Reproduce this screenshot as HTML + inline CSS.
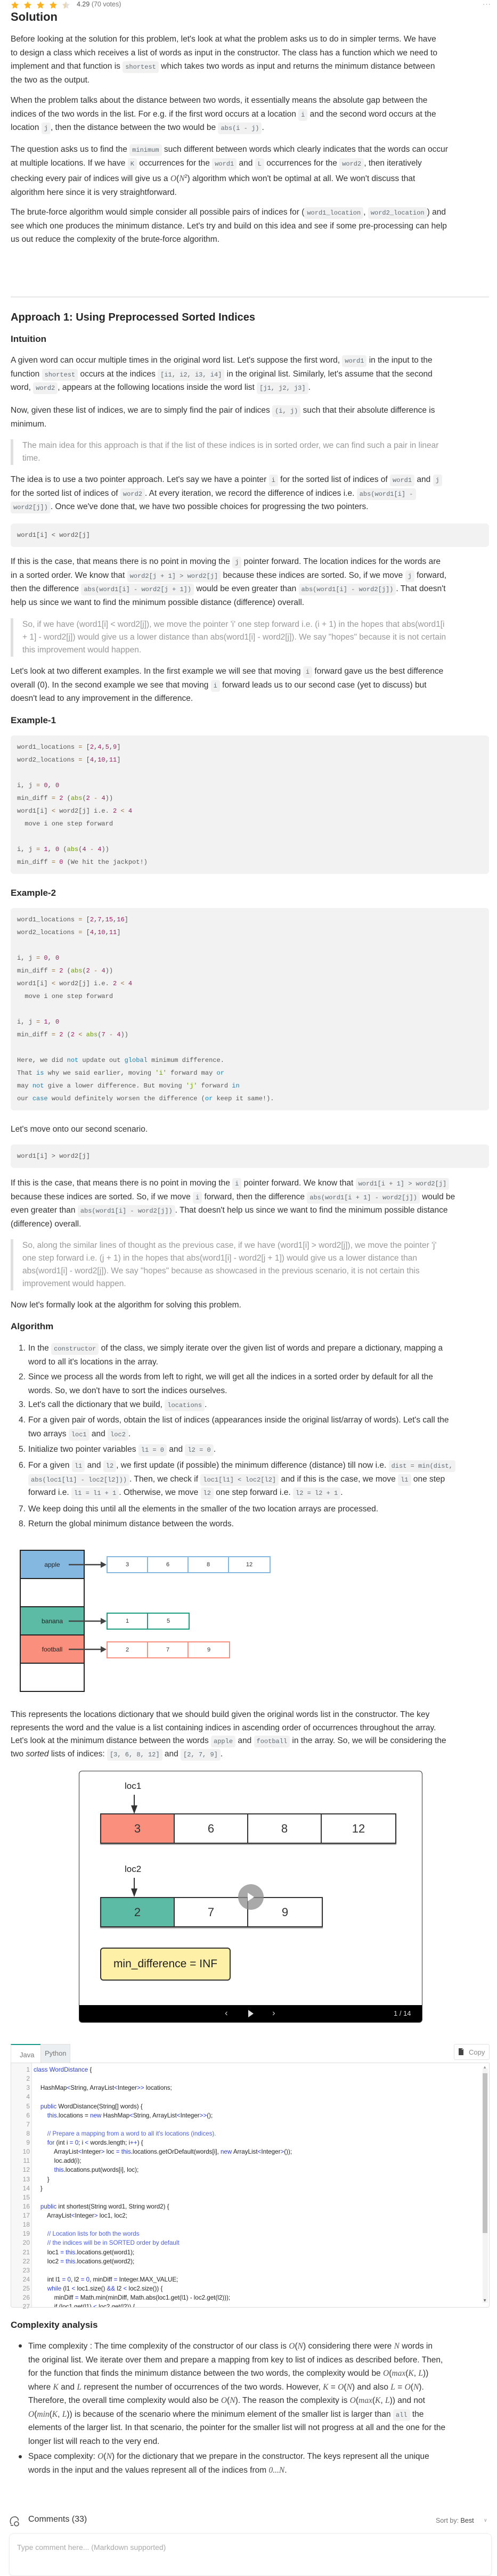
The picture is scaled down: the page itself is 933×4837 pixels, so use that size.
<!DOCTYPE html>
<html><head><meta charset="utf-8">
<style>
*{box-sizing:border-box}
body{margin:0;background:#fff;width:933px;height:4819px;position:relative;overflow:hidden;font-family:"Liberation Sans",sans-serif;color:#333}
.p{position:absolute;left:20px;margin:0;font-size:15.5px;line-height:25.5px;white-space:nowrap;color:#333}
.c{font:12px "Liberation Mono",monospace;background:#f1f1f1;color:#5f6b73;padding:4px 5px;border-radius:4px}
.h{position:absolute;left:20px;margin:0;font-weight:bold;color:#262626;white-space:nowrap}
.bq{position:absolute;left:20px;width:898px;border-left:5px solid #e0e0e0;padding-left:17px;font-size:15.5px;line-height:24px;color:#9a9a9a;white-space:nowrap}
.cb{position:absolute;left:20px;width:898px;background:#f2f2f2;border-radius:6px;padding:10px 12px;font:12px/24px "Liberation Mono",monospace;color:#555;white-space:pre}
.n{color:#a0195e}.g{color:#6b9c00}.o{color:#9a6e3a}.b{color:#1b7fb0}
.m{font-family:"Liberation Serif",serif;font-style:italic;color:#555}
.li{position:absolute;left:35px;font-size:15.5px;line-height:25.5px;white-space:nowrap;color:#333}
.li span.num{position:absolute;left:0}
.li .t{margin-left:18px;display:block}
.cell{position:absolute;display:flex;align-items:center;justify-content:center}
.code{position:absolute;left:63px;font-size:11.6px;line-height:17.12px;white-space:pre;color:#222}
.k{color:#2b3ed8}.cm{color:#4b5fe6}
.ln{position:absolute;left:20px;width:36px;text-align:right;font-size:12px;line-height:17.12px;color:#999;white-space:pre}
</style></head><body>

<!-- rating -->
<svg style="position:absolute;left:20px;top:2px" width="115" height="15" viewBox="0 0 115 15">
<g fill="#ffb21e">
<path d="M8 0.5l2.2 4.6 5 .6-3.7 3.5 1 5-4.5-2.5-4.5 2.5 1-5L.8 5.7l5-.6z"/>
<path transform="translate(24 0)" d="M8 0.5l2.2 4.6 5 .6-3.7 3.5 1 5-4.5-2.5-4.5 2.5 1-5L.8 5.7l5-.6z"/>
<path transform="translate(48 0)" d="M8 0.5l2.2 4.6 5 .6-3.7 3.5 1 5-4.5-2.5-4.5 2.5 1-5L.8 5.7l5-.6z"/>
<path transform="translate(72 0)" d="M8 0.5l2.2 4.6 5 .6-3.7 3.5 1 5-4.5-2.5-4.5 2.5 1-5L.8 5.7l5-.6z"/>
</g>
<path transform="translate(96 0)" fill="#e2e2e2" d="M8 0.5l2.2 4.6 5 .6-3.7 3.5 1 5-4.5-2.5-4.5 2.5 1-5L.8 5.7l5-.6z"/>
<path transform="translate(96 0)" fill="#ffb21e" d="M8 0.5L8 12.2 3.5 14.7l1-5L.8 5.7l5-.6z" opacity=".25"/>
</svg>
<div style="position:absolute;left:144px;top:1px;font-size:12.5px;color:#555">4.29 <span style="color:#777">(70 votes)</span></div>
<div style="position:absolute;left:906px;top:0px;font-size:13px;color:#999;letter-spacing:1px">···</div>
<div class="h" style="top:18px;font-size:22px;line-height:28px">Solution</div>

<div class="p" style="top:61px">Before looking at the solution for this problem, let's look at what the problem asks us to do in simpler terms. We have<br>to design a class which receives a list of words as input in the constructor. The class has a function which we need to<br>implement and that function is <span class="c">shortest</span> which takes two words as input and returns the minimum distance between<br>the two as the output.</div>

<div class="p" style="top:176px">When the problem talks about the distance between two words, it essentially means the absolute gap between the<br>indices of the two words in the list. For e.g. if the first word occurs at a location <span class="c">i</span> and the second word occurs at the<br>location <span class="c">j</span>, then the distance between the two would be <span class="c">abs(i - j)</span>.</div>

<div class="p" style="top:268px">The question asks us to find the <span class="c">minimum</span> such different between words which clearly indicates that the words can occur<br>at multiple locations. If we have <span class="c">K</span> occurrences for the <span class="c">word1</span> and <span class="c">L</span> occurrences for the <span class="c">word2</span>, then iteratively<br>checking every pair of indices will give us a <span class="m">O</span>(<span class="m">N</span><sup style="font-size:9px">2</sup>) algorithm which won't be optimal at all. We won't discuss that<br>algorithm here since it is very straightforward.</div>

<div class="p" style="top:386px">The brute-force algorithm would simple consider all possible pairs of indices for (<span class="c">word1_location</span>, <span class="c">word2_location</span>) and<br>see which one produces the minimum distance. Let's try and build on this idea and see if some pre-processing can help<br>us out reduce the complexity of the brute-force algorithm.</div>

<div style="position:absolute;left:20px;top:556px;width:898px;height:3px;background:#eee"></div>

<div class="h" style="top:583px;font-size:20px;line-height:26px">Approach 1: Using Preprocessed Sorted Indices</div>
<div class="h" style="top:625px;font-size:17px;line-height:24px">Intuition</div>

<div class="p" style="top:664px">A given word can occur multiple times in the original word list. Let's suppose the first word, <span class="c">word1</span> in the input to the<br>function <span class="c">shortest</span> occurs at the indices <span class="c">[i1, i2, i3, i4]</span> in the original list. Similarly, let's assume that the second<br>word, <span class="c">word2</span>, appears at the following locations inside the word list <span class="c">[j1, j2, j3]</span>.</div>

<div class="p" style="top:758px">Now, given these list of indices, we are to simply find the pair of indices <span class="c">(i, j)</span> such that their absolute difference is<br>minimum.</div>

<div class="bq" style="top:825px;height:48px">The main idea for this approach is that if the list of these indices is in sorted order, we can find such a pair in linear<br>time.</div>

<div class="p" style="top:888px">The idea is to use a two pointer approach. Let's say we have a pointer <span class="c">i</span> for the sorted list of indices of <span class="c">word1</span> and <span class="c">j</span><br>for the sorted list of indices of <span class="c">word2</span>. At every iteration, we record the difference of indices i.e. <span class="c">abs(word1[i] -</span><br><span class="c">word2[j])</span>. Once we've done that, we have two possible choices for progressing the two pointers.</div>

<div class="cb" style="top:983px;height:44px">word1[i] &lt; word2[j]</div>

<div class="p" style="top:1042px">If this is the case, that means there is no point in moving the <span class="c">j</span> pointer forward. The location indices for the words are<br>in a sorted order. We know that <span class="c">word2[j + 1] &gt; word2[j]</span> because these indices are sorted. So, if we move <span class="c">j</span> forward,<br>then the difference <span class="c">abs(word1[i] - word2[j + 1])</span> would be even greater than <span class="c">abs(word1[i] - word2[j])</span>. That doesn't<br>help us since we want to find the minimum possible distance (difference) overall.</div>

<div class="bq" style="top:1161px;height:72px">So, if we have (word1[i] &lt; word2[j]), we move the pointer 'i' one step forward i.e. (i + 1) in the hopes that abs(word1[i<br>+ 1] - word2[j]) would give us a lower distance than abs(word1[i] - word2[j]). We say "hopes" because it is not certain<br>this improvement would happen.</div>

<div class="p" style="top:1248px">Let's look at two different examples. In the first example we will see that moving <span class="c">i</span> forward gave us the best difference<br>overall (0). In the second example we see that moving <span class="c">i</span> forward leads us to our second case (yet to discuss) but<br>doesn't lead to any improvement in the difference.</div>

<div class="h" style="top:1341px;font-size:17px;line-height:24px">Example-1</div>
<div class="cb" style="top:1381px;height:260px">word1_locations <span class="o">=</span> [<span class="n">2</span>,<span class="n">4</span>,<span class="n">5</span>,<span class="n">9</span>]
word2_locations <span class="o">=</span> [<span class="n">4</span>,<span class="n">10</span>,<span class="n">11</span>]

i, j <span class="o">=</span> <span class="n">0</span>, <span class="n">0</span>
min_diff <span class="o">=</span> <span class="n">2</span> (<span class="g">abs</span>(<span class="n">2</span> <span class="o">-</span> <span class="n">4</span>))
word1[i] <span class="o">&lt;</span> word2[j] i.e. <span class="n">2</span> <span class="o">&lt;</span> <span class="n">4</span>
  move i one step forward

i, j <span class="o">=</span> <span class="n">1</span>, <span class="n">0</span> (<span class="g">abs</span>(<span class="n">4</span> <span class="o">-</span> <span class="n">4</span>))
min_diff <span class="o">=</span> <span class="n">0</span> (We hit the jackpot!)</div>

<div class="h" style="top:1665px;font-size:17px;line-height:24px">Example-2</div>
<div class="cb" style="top:1705px;height:380px">word1_locations <span class="o">=</span> [<span class="n">2</span>,<span class="n">7</span>,<span class="n">15</span>,<span class="n">16</span>]
word2_locations <span class="o">=</span> [<span class="n">4</span>,<span class="n">10</span>,<span class="n">11</span>]

i, j <span class="o">=</span> <span class="n">0</span>, <span class="n">0</span>
min_diff <span class="o">=</span> <span class="n">2</span> (<span class="g">abs</span>(<span class="n">2</span> <span class="o">-</span> <span class="n">4</span>))
word1[i] <span class="o">&lt;</span> word2[j] i.e. <span class="n">2</span> <span class="o">&lt;</span> <span class="n">4</span>
  move i one step forward

i, j <span class="o">=</span> <span class="n">1</span>, <span class="n">0</span>
min_diff <span class="o">=</span> <span class="n">2</span> (<span class="n">2</span> <span class="o">&lt;</span> <span class="g">abs</span>(<span class="n">7</span> <span class="o">-</span> <span class="n">4</span>))

Here, we did <span class="b">not</span> update out <span class="b">global</span> minimum difference.
That <span class="b">is</span> why we said earlier, moving <span class="g">'i'</span> forward may <span class="b">or</span>
may <span class="b">not</span> give a lower difference. But moving <span class="g">'j'</span> forward <span class="b">in</span>
our <span class="b">case</span> would definitely worsen the difference (<span class="b">or</span> keep it same!).</div>

<div class="p" style="top:2108px">Let's move onto our second scenario.</div>
<div class="cb" style="top:2149px;height:44px">word1[i] &gt; word2[j]</div>

<div class="p" style="top:2209px">If this is the case, that means there is no point in moving the <span class="c">i</span> pointer forward. We know that <span class="c">word1[i + 1] &gt; word2[j]</span><br>because these indices are sorted. So, if we move <span class="c">i</span> forward, then the difference <span class="c">abs(word1[i + 1] - word2[j])</span> would be<br>even greater than <span class="c">abs(word1[i] - word2[j])</span>. That doesn't help us since we want to find the minimum possible distance<br>(difference) overall.</div>

<div class="bq" style="top:2327px;height:96px">So, along the similar lines of thought as the previous case, if we have (word1[i] &gt; word2[j]), we move the pointer 'j'<br>one step forward i.e. (j + 1) in the hopes that abs(word1[i] - word2[j + 1]) would give us a lower distance than<br>abs(word1[i] - word2[j]). We say "hopes" because as showcased in the previous scenario, it is not certain this<br>improvement would happen.</div>

<div class="p" style="top:2438px">Now let's formally look at the algorithm for solving this problem.</div>
<div class="h" style="top:2479px;font-size:17px;line-height:24px">Algorithm</div>

<div class="li" style="top:2519px"><span class="num">1.</span><span class="t">In the <span class="c">constructor</span> of the class, we simply iterate over the given list of words and prepare a dictionary, mapping a<br>word to all it's locations in the array.</span></div>
<div class="li" style="top:2573px"><span class="num">2.</span><span class="t">Since we process all the words from left to right, we will get all the indices in a sorted order by default for all the<br>words. So, we don't have to sort the indices ourselves.</span></div>
<div class="li" style="top:2625px"><span class="num">3.</span><span class="t">Let's call the dictionary that we build, <span class="c">locations</span>.</span></div>
<div class="li" style="top:2654px"><span class="num">4.</span><span class="t">For a given pair of words, obtain the list of indices (appearances inside the original list/array of words). Let's call the<br>two arrays <span class="c">loc1</span> and <span class="c">loc2</span>.</span></div>
<div class="li" style="top:2709px"><span class="num">5.</span><span class="t">Initialize two pointer variables <span class="c">l1 = 0</span> and <span class="c">l2 = 0</span>.</span></div>
<div class="li" style="top:2739px"><span class="num">6.</span><span class="t">For a given <span class="c">l1</span> and <span class="c">l2</span>, we first update (if possible) the minimum difference (distance) till now i.e. <span class="c">dist = min(dist,</span><br><span class="c">abs(loc1[l1] - loc2[l2]))</span>. Then, we check if <span class="c">loc1[l1] &lt; loc2[l2]</span> and if this is the case, we move <span class="c">l1</span> one step<br>forward i.e. <span class="c">l1 = l1 + 1</span>. Otherwise, we move <span class="c">l2</span> one step forward i.e. <span class="c">l2 = l2 + 1</span>.</span></div>
<div class="li" style="top:2821px"><span class="num">7.</span><span class="t">We keep doing this until all the elements in the smaller of the two location arrays are processed.</span></div>
<div class="li" style="top:2849px"><span class="num">8.</span><span class="t">Return the global minimum distance between the words.</span></div>

<!-- dictionary diagram -->
<div style="position:absolute;left:37px;top:2910px;width:122px;height:267px;border:2px solid #222;background:#fff"></div>
<div class="cell" style="left:37px;top:2910px;width:122px;height:55px;background:#85b8e0;border:2px solid #222;font-size:12px;color:#222">apple</div>
<div class="cell" style="left:37px;top:3016px;width:122px;height:55px;background:#5bbba5;border:2px solid #222;font-size:12px;color:#222">banana</div>
<div class="cell" style="left:37px;top:3069px;width:122px;height:55px;background:#fb8f7d;border:2px solid #222;font-size:12px;color:#222">football</div>
<svg style="position:absolute;left:125px;top:2930px" width="80" height="200">
<g stroke="#444" stroke-width="2.5" fill="#444">
<line x1="4" y1="8" x2="66" y2="8"/><path d="M64 2L75 8 64 14z" stroke="none"/>
<line x1="4" y1="114" x2="66" y2="114"/><path d="M64 108L75 114 64 120z" stroke="none"/>
<line x1="4" y1="167" x2="66" y2="167"/><path d="M64 161L75 167 64 173z" stroke="none"/>
</g></svg>
<div style="position:absolute;left:200px;top:2922px;display:flex;border:2px solid #85b8e0;height:32px">
<div class="cell" style="position:static;width:76px;border-right:2px solid #85b8e0;font-size:11px">3</div>
<div class="cell" style="position:static;width:76px;border-right:2px solid #85b8e0;font-size:11px">6</div>
<div class="cell" style="position:static;width:76px;border-right:2px solid #85b8e0;font-size:11px">8</div>
<div class="cell" style="position:static;width:76px;font-size:11px">12</div></div>
<div style="position:absolute;left:200px;top:3028px;display:flex;border:2px solid #1a9c80;height:32px">
<div class="cell" style="position:static;width:76px;border-right:2px solid #1a9c80;font-size:11px">1</div>
<div class="cell" style="position:static;width:76px;font-size:11px">5</div></div>
<div style="position:absolute;left:200px;top:3082px;display:flex;border:2px solid #fb8f7d;height:32px">
<div class="cell" style="position:static;width:76px;border-right:2px solid #fb8f7d;font-size:11px">2</div>
<div class="cell" style="position:static;width:76px;border-right:2px solid #fb8f7d;font-size:11px">7</div>
<div class="cell" style="position:static;width:76px;font-size:11px">9</div></div>

<div class="p" style="top:3208px;line-height:24.5px">This represents the locations dictionary that we should build given the original words list in the constructor. The key<br>represents the word and the value is a list containing indices in ascending order of occurrences throughout the array.<br>Let's look at the minimum distance between the words <span class="c">apple</span> and <span class="c">football</span> in the array. So, we will be considering the<br>two <i>sorted</i> lists of indices: <span class="c">[3, 6, 8, 12]</span> and <span class="c">[2, 7, 9]</span>.</div>

<!-- slideshow -->
<div style="position:absolute;left:148px;top:3325px;width:645px;height:473px;border:1px solid #333;border-radius:6px;overflow:hidden;background:#fff">
<div style="position:absolute;left:0;bottom:0;width:100%;height:32px;background:#000;color:#fff">
<div style="position:absolute;left:273px;top:5px;font-size:17px;color:#ccc">&#8249;</div>
<svg style="position:absolute;left:316px;top:9px" width="12" height="14"><path d="M1 0L11 7 1 14z" fill="#ddd"/></svg>
<div style="position:absolute;left:362px;top:5px;font-size:17px;color:#ccc">&#8250;</div>
<div style="position:absolute;left:590px;top:8px;font-size:13px;color:#ddd">1 / 14</div>
</div>
</div>
<div style="position:absolute;left:234px;top:3344px;font-size:17px;color:#222">loc1</div>
<svg style="position:absolute;left:245px;top:3370px" width="14" height="38"><line x1="7" y1="0" x2="7" y2="22" stroke="#333" stroke-width="2"/><path d="M1 20L13 20 7 36z" fill="#333"/></svg>
<div style="position:absolute;left:188px;top:3405px;display:flex;border:2px solid #333;height:57px;box-shadow:0 2px 1px #999">
<div class="cell" style="position:static;width:138px;border-right:2px solid #333;background:#fb8f7d;font-size:22px">3</div>
<div class="cell" style="position:static;width:138px;border-right:2px solid #333;font-size:22px">6</div>
<div class="cell" style="position:static;width:138px;border-right:2px solid #333;font-size:22px">8</div>
<div class="cell" style="position:static;width:138px;font-size:22px">12</div></div>
<div style="position:absolute;left:234px;top:3500px;font-size:17px;color:#222">loc2</div>
<svg style="position:absolute;left:245px;top:3526px" width="14" height="38"><line x1="7" y1="0" x2="7" y2="22" stroke="#333" stroke-width="2"/><path d="M1 20L13 20 7 36z" fill="#333"/></svg>
<div style="position:absolute;left:188px;top:3562px;display:flex;border:2px solid #333;height:57px;box-shadow:0 2px 1px #999">
<div class="cell" style="position:static;width:138px;border-right:2px solid #333;background:#5bbba5;font-size:22px">2</div>
<div class="cell" style="position:static;width:138px;border-right:2px solid #333;font-size:22px">7</div>
<div class="cell" style="position:static;width:138px;font-size:22px">9</div></div>
<div style="position:absolute;left:447px;top:3538px;width:48px;height:48px;border-radius:50%;background:rgba(140,140,140,.75)"></div>
<svg style="position:absolute;left:464px;top:3553px" width="14" height="18"><path d="M1 1L13 9 1 17z" fill="#fff"/></svg>
<div class="cell" style="left:188px;top:3657px;width:245px;height:62px;background:#fff0a8;border:2px solid #333;border-radius:6px;font-size:21px;color:#222">min_difference = INF</div>

<!-- code widget -->
<div style="position:absolute;left:20px;top:3838px;width:56px;height:36px;background:#fff;border-top:2px solid #1a9c8c;border-left:1px solid #e6e6e6;font-size:13px;color:#777;padding:11px 0 0 16px">Java</div>
<div style="position:absolute;left:76px;top:3838px;width:56px;height:36px;background:#eceff1;border:1px solid #e0e0e0;border-bottom:none;font-size:13px;color:#777;padding:9px 0 0 7px">Python</div>
<div style="position:absolute;left:852px;top:3838px;width:67px;height:30px;border:1px solid #e2e2e2;border-radius:3px;font-size:13px;color:#888;padding:7px 0 0 27px">Copy</div>
<svg style="position:absolute;left:860px;top:3845px" width="12" height="15"><path d="M1 1h6v3h3v10H1z" fill="#444"/><path d="M7 1l3 3" stroke="#444"/></svg>
<div style="position:absolute;left:20px;top:3873px;width:899px;height:460px;border:1px solid #ddd;border-radius:0 0 4px 4px;overflow:hidden;background:#fff">
<div style="position:absolute;left:0;top:0;width:39px;height:100%;background:#f7f7f7;border-right:1px solid #e2e2e2"></div>
<div style="position:absolute;right:2px;top:10px;width:10px;height:440px;background:#f3f3f3"></div>
<div style="position:absolute;right:3px;top:19px;width:9px;height:300px;background:#c1c1c1"></div>
<div style="position:absolute;right:4px;top:3px;font-size:8px;color:#999">&#9650;</div>
<div style="position:absolute;right:4px;bottom:8px;font-size:8px;color:#666">&#9660;</div>
</div>
<div class="ln" style="top:3878px">1
2
3
4
5
6
7
8
9
10
11
12
13
14
15
16
17
18
19
20
21
22
23
24
25
26
27</div>
<div style="position:absolute;left:21px;top:3874px;width:880px;height:458px;overflow:hidden">
<div class="code" style="left:42px;top:4px"><span class="k">class WordDistance</span> {

    HashMap<span class="k">&lt;</span>String, ArrayList<span class="k">&lt;</span>Integer<span class="k">&gt;&gt;</span> locations;

    <span class="k">public</span> WordDistance(String[] words) {
        <span class="k">this</span>.locations = <span class="k">new</span> HashMap<span class="k">&lt;</span>String, ArrayList<span class="k">&lt;</span>Integer<span class="k">&gt;&gt;</span>();

        <span class="cm">// Prepare a mapping from a word to all it's locations (indices).</span>
        <span class="k">for</span> (int i <span class="k">=</span> <span class="k">0</span>; i <span class="k">&lt;</span> words.length; i<span class="k">++</span>) {
            ArrayList<span class="k">&lt;</span>Integer<span class="k">&gt;</span> loc <span class="k">=</span> <span class="k">this</span>.locations.getOrDefault(words[i], <span class="k">new</span> ArrayList<span class="k">&lt;</span>Integer<span class="k">&gt;</span>());
            loc.add(i);
            <span class="k">this</span>.locations.put(words[i], loc);
        }
    }

    <span class="k">public</span> int shortest(String word1, String word2) {
        ArrayList<span class="k">&lt;</span>Integer<span class="k">&gt;</span> loc1, loc2;

        <span class="cm">// Location lists for both the words</span>
        <span class="cm">// the indices will be in SORTED order by default</span>
        loc1 <span class="k">=</span> <span class="k">this</span>.locations.get(word1);
        loc2 <span class="k">=</span> <span class="k">this</span>.locations.get(word2);

        int l1 <span class="k">=</span> <span class="k">0</span>, l2 <span class="k">=</span> <span class="k">0</span>, minDiff <span class="k">=</span> Integer.MAX_VALUE;
        <span class="k">while</span> (l1 <span class="k">&lt;</span> loc1.size() <span class="k">&amp;&amp;</span> l2 <span class="k">&lt;</span> loc2.size()) {
            minDiff <span class="k">=</span> Math.min(minDiff, Math.abs(loc1.get(l1) - loc2.get(l2)));
            if (loc1.get(l1) <span class="k">&lt;</span> loc2.get(l2)) {</div>
</div>

<div class="h" style="top:4354px;font-size:17px;line-height:24px">Complexity analysis</div>

<div style="position:absolute;left:35px;top:4402px;width:6px;height:6px;border-radius:50%;background:#333"></div>
<div class="p" style="left:53px;top:4393px">Time complexity : The time complexity of the constructor of our class is <span class="m">O</span>(<span class="m">N</span>) considering there were <span class="m">N</span> words in<br>the original list. We iterate over them and prepare a mapping from key to list of indices as described before. Then,<br>for the function that finds the minimum distance between the two words, the complexity would be <span class="m">O</span>(<span class="m">max</span>(<span class="m">K</span>, <span class="m">L</span>))<br>where <span class="m">K</span> and <span class="m">L</span> represent the number of occurrences of the two words. However, <span class="m">K</span> = <span class="m">O</span>(<span class="m">N</span>) and also <span class="m">L</span> = <span class="m">O</span>(<span class="m">N</span>).<br>Therefore, the overall time complexity would also be <span class="m">O</span>(<span class="m">N</span>). The reason the complexity is <span class="m">O</span>(<span class="m">max</span>(<span class="m">K</span>, <span class="m">L</span>)) and not<br><span class="m">O</span>(<span class="m">min</span>(<span class="m">K</span>, <span class="m">L</span>)) is because of the scenario where the minimum element of the smaller list is larger than <span class="c">all</span> the<br>elements of the larger list. In that scenario, the pointer for the smaller list will not progress at all and the one for the<br>longer list will reach to the very end.</div>
<div style="position:absolute;left:35px;top:4610px;width:6px;height:6px;border-radius:50%;background:#333"></div>
<div class="p" style="left:53px;top:4600px">Space complexity: <span class="m">O</span>(<span class="m">N</span>) for the dictionary that we prepare in the constructor. The keys represent all the unique<br>words in the input and the values represent all of the indices from <span class="m">0...N</span>.</div>

<!-- comments -->
<svg style="position:absolute;left:17px;top:4723px" width="22" height="22" viewBox="0 0 22 22"><path d="M4 17 C1 12 2 4 9 3 C14 2 18 6 17 10" fill="none" stroke="#555" stroke-width="1.6"/><circle cx="14" cy="16" r="4" fill="none" stroke="#555" stroke-width="1.6"/><path d="M3 19h5" stroke="#555" stroke-width="1.6"/></svg>
<div style="position:absolute;left:53px;top:4722px;font-size:16px;color:#333">Comments (33)</div>
<div style="position:absolute;left:818px;top:4726px;font-size:12.5px;color:#777">Sort by: <span style="color:#444">Best</span></div>
<div style="position:absolute;left:908px;top:4727px;font-size:9px;color:#999">&#8744;</div>
<div style="position:absolute;left:17px;top:4757px;width:906px;height:80px;border:1px solid #eee;border-radius:8px;box-shadow:0 1px 3px rgba(0,0,0,.06)"></div>
<div style="position:absolute;left:32px;top:4775px;font-size:14px;color:#aaa">Type comment here... (Markdown supported)</div>

</body></html>
